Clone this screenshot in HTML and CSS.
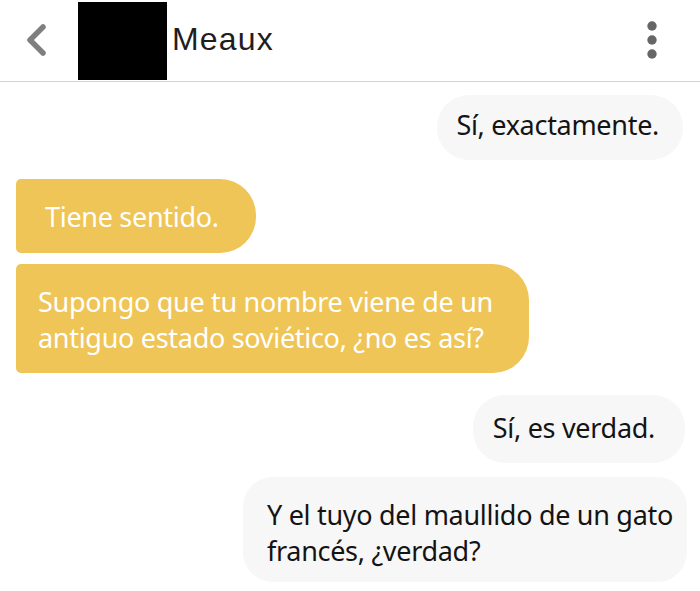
FILE: index.html
```html
<!DOCTYPE html>
<html lang="es">
<head>
    <meta charset="UTF-8">
    <meta name="viewport" content="width=device-width, initial-scale=1.0">
    <title>Meaux</title>
    <link rel="stylesheet" href="styles.css">
</head>
<body>

    <!-- Top bar -->
    <div class="topbar">
        <svg class="back" width="24" height="34" viewBox="0 0 24 34">
            <polyline points="18,4 5,17 18,30" fill="none" stroke="#7f7f7f" stroke-width="5.5" stroke-linecap="round" stroke-linejoin="round"/>
        </svg>
        <div class="avatar"></div>
        <span class="name">Meaux</span>
        <svg class="more" width="12" height="40" viewBox="0 0 12 40">
            <circle cx="6" cy="6" r="4.7" fill="#666"/>
            <circle cx="6" cy="20" r="4.7" fill="#666"/>
            <circle cx="6" cy="34" r="4.7" fill="#666"/>
        </svg>
    </div>

    <!-- Conversation -->
    <div class="chat">
        <div class="bubble me first">Sí, exactamente.</div>
        <div class="bubble them short">Tiene sentido.</div>
        <div class="bubble them long">Supongo que tu nombre viene de un<br>antiguo estado soviético, ¿no es así?</div>
        <div class="bubble me mid">Sí, es verdad.</div>
        <div class="bubble me last">Y el tuyo del maullido de un gato<br>francés, ¿verdad?</div>
    </div>

</body>
</html>
```

FILE: styles.css
```css
body { margin: 0; background: #fff; font-family: "Noto Sans", "Open Sans", sans-serif; }

.topbar {
    height: 81px;
    border-bottom: 1px solid #d2d2d2;
    display: flex;
    align-items: center;
}

.back { margin-left: 25px; margin-top: -2px; }

.avatar {
    width: 89px;
    height: 78px;
    background: #000;
    margin-left: 29px;
    margin-top: 2px;
    align-self: flex-start;
}

.name {
    font-family: "Liberation Sans", Arial, sans-serif;
    font-size: 32px;
    letter-spacing: 1.2px;
    color: #1e1e1e;
    margin-left: 5px;
    margin-top: -2px;
}

.more { margin-left: auto; margin-right: 42px; margin-top: -2px; }

/* messages */
.chat {
    display: flex;
    flex-direction: column;
    padding-top: 13px;
}

.bubble {
    font-size: 27px;
    letter-spacing: -0.3px;
    line-height: 36px;
    white-space: nowrap;
}

.me {
    align-self: flex-end;
    background: #f7f7f7;
    color: #141414;
    border-radius: 32px;
}

.them {
    align-self: flex-start;
    background: #efc557;
    color: #fff;
    margin-left: 16px;
    border-radius: 5px 36px 36px 5px;
}

.first { margin-right: 17px; padding: 12px 24px 17px 19px; }
.short { margin-top: 19px; padding: 20px 37px 18px 29px; }
.long { margin-top: 11px; padding: 20px 36px 17px 22px; }
.mid { margin-top: 22px; margin-right: 15px; padding: 15px 30px 17px 20px; }
.last { margin-top: 14px; margin-right: 13px; padding: 20px 14px 13px 24px; border-radius: 30px; }
```
